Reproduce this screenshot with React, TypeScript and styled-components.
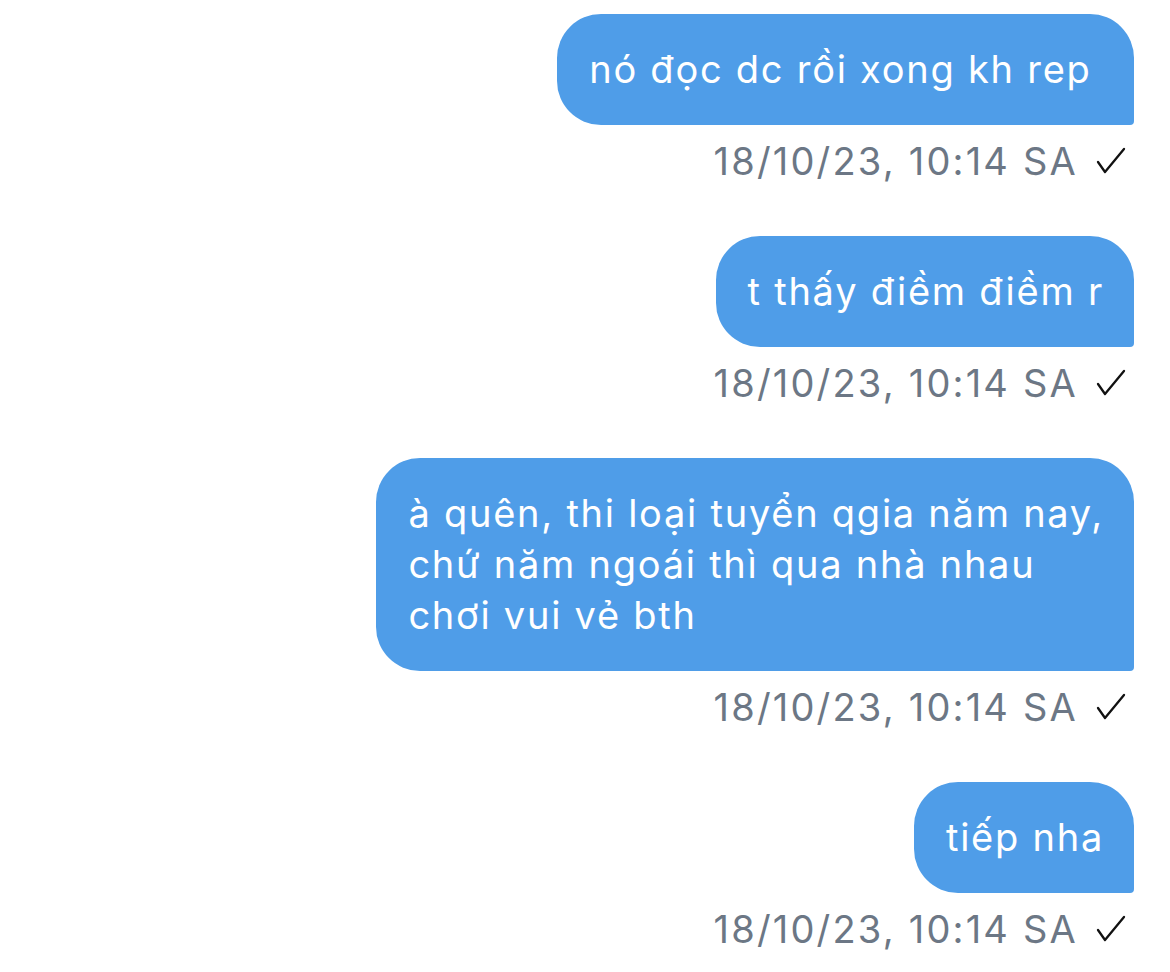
import styled, { createGlobalStyle } from "styled-components";

const GlobalStyle = createGlobalStyle`
  html, body {
    margin: 0;
    padding: 0;
    background: #ffffff;
  }
  body {
    font-family: Inter, "Noto Sans", "Liberation Sans", sans-serif;
  }
`;

const Screen = styled.div`
  width: 1170px;
  height: 972px;
  display: flex;
  flex-direction: column;
  background: #ffffff;
  overflow: hidden;
`;

const Thread = styled.div`
  flex: 1;
  display: flex;
  flex-direction: column;
  align-items: flex-end;
  padding: 14px 36px 0 0;
`;

const Message = styled.div`
  display: flex;
  flex-direction: column;
  align-items: flex-end;
  margin-bottom: 53px;
`;

const Bubble = styled.div`
  background: #4f9de8;
  color: #ffffff;
  font-size: 38px;
  line-height: 51px;
  letter-spacing: 1.75px;
  padding: 30px 30px 30px 32px;
  border-radius: 44px 44px 4px 44px;
  white-space: pre-line;
`;

const Meta = styled.div`
  display: flex;
  align-items: center;
  gap: 18px;
  margin-top: 14px;
  padding-right: 8px;
  font-size: 38px;
  line-height: 44px;
  letter-spacing: 2.2px;
  color: #6c7785;
`;

const Check = styled.svg`
  width: 30px;
  height: 30px;
  flex-shrink: 0;
`;

const Footer = styled.div`
  height: 13px;
  border-top: 1px solid #e2e2e2;
`;

const messages = [
  { id: 1, text: "nó đọc dc rồi xong kh rep\u00a0" },
  { id: 2, text: "t thấy điềm điềm r" },
  {
    id: 3,
    text: "à quên, thi loại tuyển qgia năm nay,\nchứ năm ngoái thì qua nhà nhau\nchơi vui vẻ bth",
  },
  { id: 4, text: "tiếp nha" },
];

function App() {
  return (
    <Screen>
      <GlobalStyle />
      <Thread>
        {messages.map((m) => (
          <Message key={m.id}>
            <Bubble>{m.text}</Bubble>
            <Meta>
              <span>18/10/23, 10:14 SA</span>
              <Check viewBox="0 0 30 30">
                <polyline
                  points="2,16 9,26 28,3"
                  fill="none"
                  stroke="#111111"
                  strokeWidth="2.3"
                  strokeLinecap="round"
                  strokeLinejoin="round"
                />
              </Check>
            </Meta>
          </Message>
        ))}
      </Thread>
      <Footer />
    </Screen>
  );
}

export default App;
